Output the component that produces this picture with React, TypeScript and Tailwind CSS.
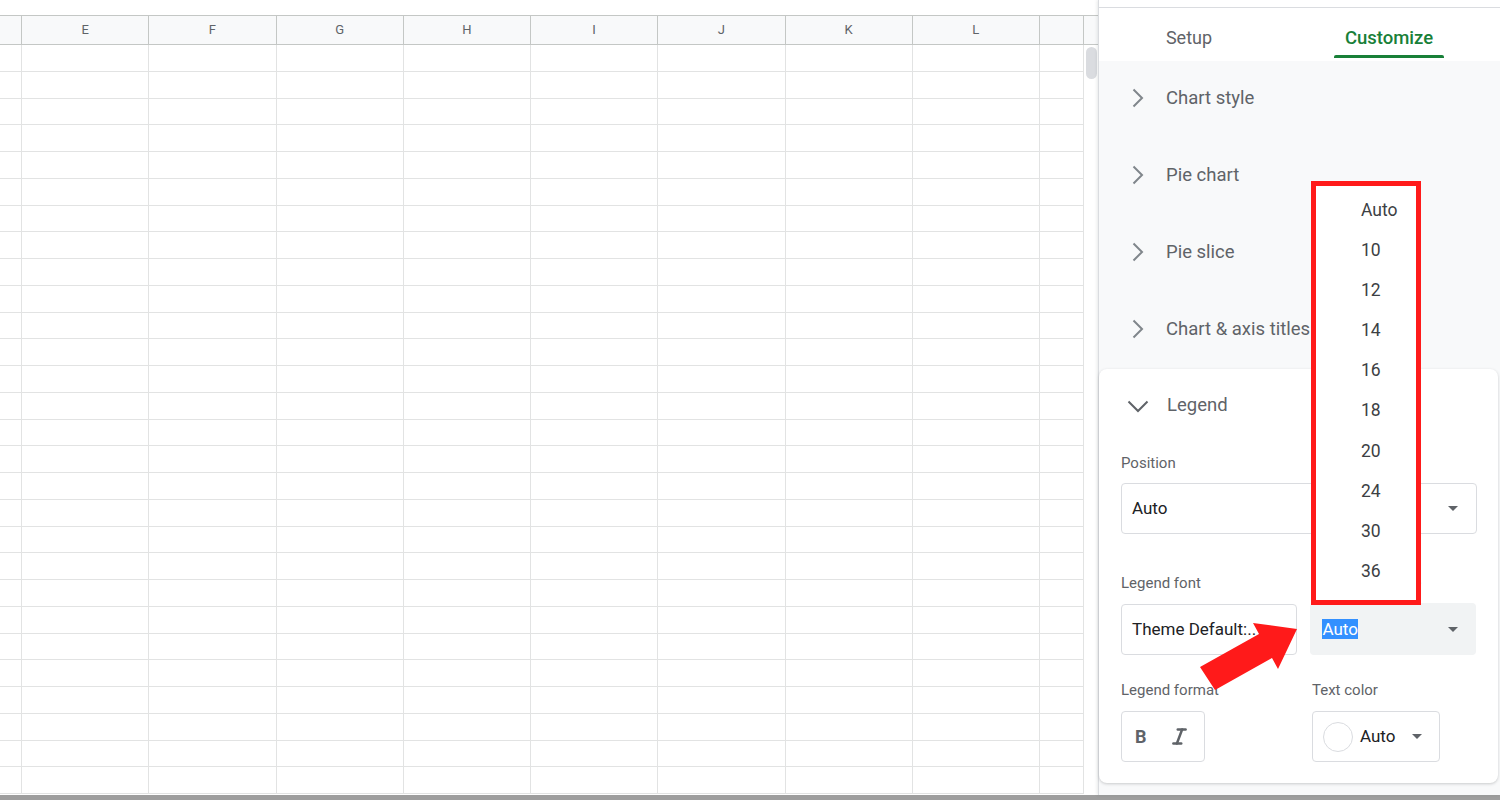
import * as React from 'react';
import { Italic } from 'lucide-react';

const columns = ['', 'E', 'F', 'G', 'H', 'I', 'J', 'K', 'L', ''];
const rows = Array.from({ length: 28 }, (_, i) => i);
const sizes = ['Auto', '10', '12', '14', '16', '18', '20', '24', '30', '36'];
const sections = ['Chart style', 'Pie chart', 'Pie slice', 'Chart & axis titles'];

function ChevronRight() {
  return (
    <svg width="12" height="20" viewBox="0 0 12 20" className="shrink-0">
      <polyline points="1.5,1.5 10,10 1.5,18.5" fill="none" stroke="#80868b" strokeWidth="2" />
    </svg>
  );
}

function ChevronDown() {
  return (
    <svg width="22" height="13" viewBox="0 0 22 13" className="shrink-0">
      <polyline points="1.5,1.5 11,11 20.5,1.5" fill="none" stroke="#5f6368" strokeWidth="2" />
    </svg>
  );
}

function Caret() {
  return (
    <svg width="10" height="5" viewBox="0 0 10 5" className="shrink-0">
      <polygon points="0,0 10,0 5,5" fill="#5f6368" />
    </svg>
  );
}

function Grid() {
  return (
    <div className="flex w-[1098px] h-full">
      <div className="w-[1084px] h-full flex flex-col">
        <div className="h-[15px] shrink-0 bg-white" />
        <div className="grid grid-cols-[22px_repeat(8,127.25px)_44px] h-[30px] shrink-0 border-y border-[#c4c7c5] bg-[#f8f9fa]">
          {columns.map((c, i) => (
            <div
              key={i}
              className="border-r border-[#c4c7c5] flex items-center justify-center text-[13px] text-[#5f6368]"
            >
              {c}
            </div>
          ))}
        </div>
        {rows.map((r) => (
          <div
            key={r}
            className="grid grid-cols-[22px_repeat(8,127.25px)_44px] h-[26.75px] shrink-0 border-b border-[#e2e3e3]"
          >
            {columns.map((_, i) => (
              <div key={i} className="border-r border-[#e2e3e3]" />
            ))}
          </div>
        ))}
      </div>
      <div className="w-[14px] h-full flex flex-col bg-white">
        <div className="h-[15px] shrink-0" />
        <div className="h-[30px] shrink-0 border-y border-[#c4c7c5] bg-[#f8f9fa]" />
        <div className="ml-[2px] mt-[2px] w-[11px] h-[32px] rounded-full bg-[#dadce0]" />
      </div>
    </div>
  );
}

function Label({ children }: { children: React.ReactNode }) {
  return <div className="text-[15px] leading-[18px] text-[#5f6368] whitespace-nowrap">{children}</div>;
}

function LegendCard() {
  return (
    <div className="mr-[2px] h-[414px] bg-white rounded-[8px] shadow-[0_1px_3px_rgba(60,64,67,0.25)] px-[22px] pt-[26px]">
      <div className="flex items-center h-[22px]">
        <div className="ml-[6px]">
          <ChevronDown />
        </div>
        <span className="ml-[18px] text-[18.5px] text-[#5f6368]">Legend</span>
      </div>

      <div className="mt-[37px]">
        <Label>Position</Label>
      </div>
      <div className="mt-[11px] h-[51px] w-[356px] border border-[#dadce0] rounded-[4px] flex items-center justify-between pl-[10px] pr-[18px]">
        <span className="text-[17px] text-[#202124]">Auto</span>
        <Caret />
      </div>

      <div className="mt-[40px] flex">
        <div className="w-[190px]">
          <Label>Legend font</Label>
        </div>
        <Label>Legend font size</Label>
      </div>
      <div className="mt-[12px] flex">
        <div className="w-[177px] h-[51px] border border-[#dadce0] rounded-[4px] flex items-center pl-[10px]">
          <span className="text-[17px] text-[#202124] whitespace-nowrap">Theme Default:..</span>
        </div>
        <div className="ml-[13px] w-[166px] h-[52px] -mt-[1px] rounded-[4px] bg-[#f1f3f4] flex items-center justify-between pl-[12px] pr-[18px]">
          <span className="text-[17px] leading-[20px] bg-[#3390ff] text-white">Auto</span>
          <Caret />
        </div>
      </div>

      <div className="mt-[26px] flex">
        <div className="w-[191px]">
          <Label>Legend format</Label>
        </div>
        <Label>Text color</Label>
      </div>
      <div className="mt-[12px] flex">
        <div className="w-[84px] h-[51px] border border-[#dadce0] rounded-[4px] flex items-center pl-[13px] gap-[22px]">
          <span className="text-[18px] font-bold text-[#5f6368]">B</span>
          <Italic size={21} strokeWidth={2.8} color="#5f6368" />
        </div>
        <div className="ml-[107px] w-[128px] h-[51px] border border-[#dadce0] rounded-[4px] flex items-center pl-[10px]">
          <div className="w-[30px] h-[30px] rounded-full border border-[#dadce0] bg-white" />
          <span className="ml-[7px] text-[17px] text-[#202124]">Auto</span>
          <div className="ml-[17px]">
            <Caret />
          </div>
        </div>
      </div>
    </div>
  );
}

function Panel() {
  return (
    <div className="w-[402px] h-full flex flex-col border-l border-[#dadce0] shadow-[-1px_0_3px_rgba(60,64,67,0.12)]">
      <div className="h-[8px] shrink-0 bg-white border-b border-[#dadce0]" />
      <div className="h-[53px] shrink-0 bg-white flex pl-[30px]">
        <div className="w-[120px] flex flex-col items-center">
          <span className="pt-[19px] leading-[22px] text-[18px] text-[#5f6368]">Setup</span>
        </div>
        <div className="ml-[85px] w-[110px] flex flex-col items-center">
          <span className="pt-[19px] leading-[22px] text-[18.5px] font-medium text-[#188038]">Customize</span>
          <div className="mt-[6px] h-[3px] w-full bg-[#188038] rounded-t-[2px]" />
        </div>
      </div>
      <div className="flex-1 bg-[#f8f9fa]">
        {sections.map((s) => (
          <div key={s} className="h-[77px] flex items-start pt-[26px] pl-[33px]">
            <div className="h-[22px] flex items-center">
              <ChevronRight />
              <span className="ml-[22px] text-[18.5px] leading-[22px] text-[#5f6368] whitespace-nowrap">{s}</span>
            </div>
          </div>
        ))}
        <LegendCard />
      </div>
    </div>
  );
}

export default function App() {
  return (
    <div className="relative w-[1500px] h-[800px] overflow-hidden bg-white font-['Roboto','Liberation_Sans',sans-serif]">
      <div className="flex h-[795px]">
        <Grid />
        <Panel />
      </div>
      <div className="h-[5px] bg-[#9e9e9e]" />

      <div className="absolute left-[1311px] top-[181px] w-[110px] h-[424px] border-[5px] border-[#ff1a1a] bg-white pt-[4px]">
        {sizes.map((s) => (
          <div key={s} className="h-[40.1px] leading-[40px] pl-[45px] text-[17.5px] text-[#3c4043]">
            {s}
          </div>
        ))}
      </div>

      <svg className="absolute left-0 top-0" width="1500" height="800" viewBox="0 0 1500 800">
        <polygon
          points="1200,667 1259,634 1253,623 1297,629 1278,669 1272,658 1215,690"
          fill="#ff1a1a"
        />
      </svg>
    </div>
  );
}
